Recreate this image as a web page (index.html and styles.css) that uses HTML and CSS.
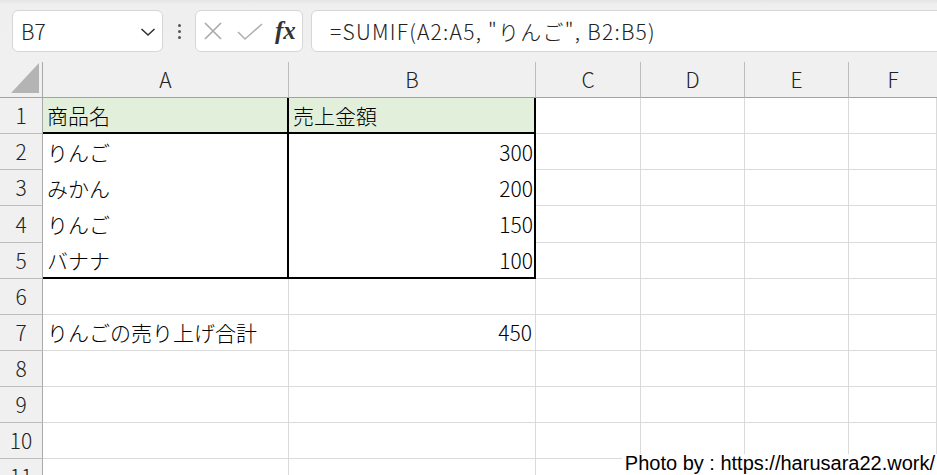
FILE: index.html
```html
<!DOCTYPE html>
<html lang="ja">
<head>
<meta charset="utf-8">
<title>SUMIF</title>
<link rel="stylesheet" href="styles.css">
</head>
<body>
<div class="app">
  <header class="toolbar">
    <div class="namebox">
      <span class="name">B7</span>
      <svg class="chev" width="16" height="10" viewBox="0 0 16 10"><polyline points="1.5,2 8,8 14.5,2" fill="none" stroke="#333" stroke-width="1.6"/></svg>
    </div>
    <div class="grip"><i></i><i></i><i></i></div>
    <div class="fxbox">
      <svg class="ico-x" width="18" height="18" viewBox="0 0 18 18"><path d="M1 1 L17 17 M17 1 L1 17" stroke="#a8a8a8" stroke-width="1.6" fill="none"/></svg>
      <svg class="ico-ok" width="26" height="18" viewBox="0 0 26 18"><polyline points="1,9 8,16 25,1" fill="none" stroke="#b0b0b0" stroke-width="1.6"/></svg>
      <span class="fx">fx</span>
    </div>
    <div class="formula">=SUMIF(A2:A5, "りんご", B2:B5)</div>
  </header>

  <div class="sheet">
    <div class="corner"><svg width="29" height="31" viewBox="0 0 29 31"><polygon points="0,30 28,30 28,0" fill="#b4b4b4"/></svg></div>
    <div class="ch">A</div><div class="ch">B</div><div class="ch">C</div><div class="ch">D</div><div class="ch">E</div><div class="ch">F</div>

    <div class="rh">1</div>
    <div class="c hd ta">商品名</div><div class="c hd tb">売上金額</div><div class="c"></div><div class="c"></div><div class="c"></div><div class="c"></div>

    <div class="rh">2</div>
    <div class="c ta in">りんご</div><div class="c tb in num">300</div><div class="c"></div><div class="c"></div><div class="c"></div><div class="c"></div>

    <div class="rh">3</div>
    <div class="c ta in">みかん</div><div class="c tb in num">200</div><div class="c"></div><div class="c"></div><div class="c"></div><div class="c"></div>

    <div class="rh">4</div>
    <div class="c ta in">りんご</div><div class="c tb in num">150</div><div class="c"></div><div class="c"></div><div class="c"></div><div class="c"></div>

    <div class="rh">5</div>
    <div class="c ta last">バナナ</div><div class="c tb last num">100</div><div class="c"></div><div class="c"></div><div class="c"></div><div class="c"></div>

    <div class="rh">6</div>
    <div class="c"></div><div class="c"></div><div class="c"></div><div class="c"></div><div class="c"></div><div class="c"></div>

    <div class="rh">7</div>
    <div class="c">りんごの売り上げ合計</div><div class="c num">450</div><div class="c"></div><div class="c"></div><div class="c"></div><div class="c"></div>

    <div class="rh">8</div>
    <div class="c"></div><div class="c"></div><div class="c"></div><div class="c"></div><div class="c"></div><div class="c"></div>

    <div class="rh">9</div>
    <div class="c"></div><div class="c"></div><div class="c"></div><div class="c"></div><div class="c"></div><div class="c"></div>

    <div class="rh">10</div>
    <div class="c"></div><div class="c"></div><div class="c"></div><div class="c"></div><div class="c"></div><div class="c"></div>

    <div class="rh">11</div>
    <div class="c"></div><div class="c"></div><div class="c"></div><div class="c"></div><div class="c"></div><div class="c"></div>
  </div>

  <div class="credit">Photo by : https://harusara22.work/</div>
</div>
</body>
</html>
```

FILE: styles.css
```css
* { box-sizing: border-box; }
html, body { margin: 0; padding: 0; }
body {
  width: 937px;
  height: 475px;
  overflow: hidden;
  background: #fff;
  font-family: "Noto Sans CJK JP", "Noto Sans", sans-serif;
  font-weight: 300;
  color: #000;
}
.app {
  position: relative;
  width: 937px;
  height: 475px;
  overflow: hidden;
}

/* toolbar */
.toolbar {
  height: 62px;
  display: flex;
  align-items: flex-start;
  padding: 10px 0 0 12px;
  background: linear-gradient(#e4e4e4 0, #efefef 4px, #f0f0f0 100%);
}
.namebox {
  width: 151px;
  height: 42px;
  background: #fff;
  border: 1px solid #d6d6d6;
  border-radius: 6px;
  display: flex;
  align-items: center;
  justify-content: space-between;
  padding: 0 6px 0 8px;
}
.name {
  font-size: 21px;
  color: #222;
  line-height: 1;
  margin-top: 1px;
}
.chev { display: block; margin-top: 1px; }
.grip {
  width: 32px;
  height: 42px;
  display: flex;
  flex-direction: column;
  align-items: center;
  justify-content: center;
  gap: 3px;
}
.grip i {
  display: block;
  width: 3px;
  height: 3px;
  border-radius: 50%;
  background: #555;
}
.fxbox {
  width: 108px;
  height: 42px;
  background: #fff;
  border: 1px solid #d6d6d6;
  border-radius: 6px;
  display: flex;
  align-items: center;
  padding: 0 0 0 8px;
}
.ico-x { display: block; }
.ico-ok { display: block; margin-left: 15px; margin-top: 1px; }
.fx {
  margin-left: 12px;
  font-family: "Liberation Serif", "DejaVu Serif", serif;
  font-style: italic;
  font-weight: bold;
  font-size: 25px;
  color: #333;
  line-height: 1;
  margin-top: -2px;
}
.formula {
  flex: 1;
  height: 42px;
  margin-left: 8px;
  margin-right: -12px;
  background: #fff;
  border: 1px solid #d6d6d6;
  border-radius: 6px 0 0 6px;
  font-size: 21px;
  letter-spacing: 1.25px;
  color: #222;
  line-height: 40px;
  padding-left: 18px;
  white-space: nowrap;
}

/* sheet grid */
.sheet {
  display: grid;
  grid-template-columns: 43px 246px 247px 105px 104px 104px 1fr;
  grid-template-rows: 36px 36px 36px 36px 37px 36px 36px 36px 36px 36px 36px 36px;
  font-size: 21px;
}
.corner {
  background: #f0f0f0;
  border-right: 1px solid #a9a9a9;
  border-bottom: 1px solid #a3a3a3;
  display: flex;
  align-items: flex-end;
  padding: 0 0 3px 11px;
}
.corner svg { display: block; }
.ch {
  background: #f0f0f0;
  border-right: 1px solid #bdbdbd;
  border-bottom: 1px solid #a3a3a3;
  display: flex;
  align-items: center;
  justify-content: center;
  color: #222;
  line-height: 1;
}
.ch:nth-child(7) { border-right: 0; }
.rh {
  background: #f0f0f0;
  border-right: 1px solid #a9a9a9;
  border-bottom: 1px solid #bdbdbd;
  display: flex;
  align-items: center;
  justify-content: center;
  color: #222;
  line-height: 1;
}
.c {
  border-right: 1px solid #dadada;
  border-bottom: 1px solid #dadada;
  display: flex;
  align-items: center;
  padding: 0 3px 0 4px;
  white-space: nowrap;
  line-height: 1;
  background: #fff;
}
.num { justify-content: flex-end; }

/* table A1:B5 */
.hd { background: #e2efda; border-bottom: 2px solid #000; }
.ta, .tb { border-right: 2px solid #000; }
.tb { padding-right: 1px; }
.in { border-bottom: 0; }
.last { border-bottom: 2px solid #000; }

.credit {
  position: absolute;
  right: 0;
  bottom: 0;
  height: 21px;
  padding: 0 2px 0 3px;
  background: #fff;
  font-family: "Liberation Sans", Arial, sans-serif;
  font-weight: 400;
  font-size: 20px;
  line-height: 18px;
  color: #000;
  white-space: nowrap;
}
```
